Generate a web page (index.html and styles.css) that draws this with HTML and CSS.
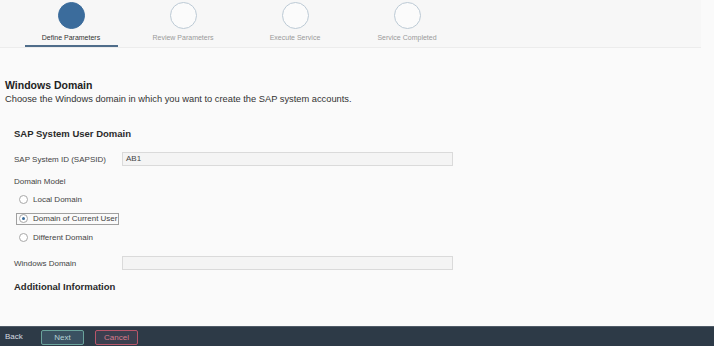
FILE: index.html
```html
<!DOCTYPE html>
<html lang="en">
<head>
  <meta charset="UTF-8"/>
  <title>Windows Domain - Define Parameters</title>
  <link rel="stylesheet" href="styles.css">
</head>
<body>
  <div class="steps">
    <div class="step active"><span class="dot"></span><span class="label">Define Parameters</span></div>
    <div class="step"><span class="dot"></span><span class="label">Review Parameters</span></div>
    <div class="step"><span class="dot"></span><span class="label">Execute Service</span></div>
    <div class="step"><span class="dot"></span><span class="label">Service Completed</span></div>
  </div>

  <main class="main">
    <h1>Windows Domain</h1>
    <p class="desc">Choose the Windows domain in which you want to create the SAP system accounts.</p>

    <section class="group">
      <h2>SAP System User Domain</h2>
      <div class="row first">
        <label>SAP System ID (SAPSID)</label>
        <div class="field">AB1</div>
      </div>
      <div class="caption">Domain Model</div>
      <ul class="radios">
        <li><span class="radio"></span>Local Domain</li>
        <li class="checked"><span class="focus"><span class="radio"></span>Domain of Current User</span></li>
        <li><span class="radio"></span>Different Domain</li>
      </ul>
      <div class="row">
        <label>Windows Domain</label>
        <div class="field"></div>
      </div>
      <h2 class="more">Additional Information</h2>
    </section>
  </main>

  <footer class="footer">
    <span class="back">Back</span>
    <button class="btn btn-next">Next</button>
    <button class="btn btn-cancel">Cancel</button>
  </footer>
</body>
</html>
```
FILE: styles.css
```css
/* ===== Global ===== */
* { margin:0; padding:0; box-sizing:border-box; }
body {
  font-family:'Liberation Sans',Arial,sans-serif;
  background:#fafafa; color:#333;
  height:100vh; overflow:hidden;
  display:flex; flex-direction:column;
}

/* ===== Steps ===== */
.steps{display:flex;padding-left:15px;width:701px;background:#f7f7f7;border-bottom:1px solid #ececec;}
.step{width:112px;display:flex;flex-direction:column;align-items:center;padding-top:2px;}
.step .dot{width:27px;height:27px;border-radius:50%;border:1px solid #bccad5;background:#fbfbfb;}
.step .label{margin-top:4px;font-size:7px;line-height:9px;color:#9a9a9a;}
.step::after{content:'';display:block;width:93px;height:2px;margin-top:3px;}
.step.active .dot{background:#3b6c9c;border-color:#3b6c9c;}
.step.active .label{color:#333;}
.step.active::after{background:#4f6d8a;}

/* ===== Main ===== */
.main{padding:0 5px;}
.main h1{margin-top:31px;font-size:10.5px;line-height:13px;font-weight:700;color:#222;}
.desc{font-size:9.3px;line-height:14px;color:#333;}
.group{padding-left:9px;}
.group h2{margin-top:22px;font-size:9.5px;line-height:12px;font-weight:700;color:#2a2a2a;}
.row{display:flex;align-items:center;height:14px;margin-top:9px;}
.row.first{margin-top:12px;}
.row label{width:108px;font-size:8px;color:#444;}
.field{width:331px;height:14px;background:#f4f4f4;border:1px solid #dadada;font-size:8px;line-height:12px;padding-left:3px;color:#444;}
.caption{margin-top:11px;font-size:8px;line-height:10px;color:#444;}
.radios{list-style:none;margin-top:3px;}
.radios li{height:19px;display:flex;align-items:center;font-size:8px;color:#444;padding-left:5px;}
.radio{width:9px;height:9px;border-radius:50%;border:1px solid #a8a8a8;background:#fff;margin-right:5px;display:flex;align-items:center;justify-content:center;}
.checked .radio::after{content:'';width:3px;height:3px;border-radius:50%;background:#3b6c9c;}
.focus{display:flex;align-items:center;margin-left:-3px;padding:1px 1px 1px 2px;border:1px solid #a0a0a0;height:12px;}
.group h2.more{margin-top:11px;}

/* ===== Footer ===== */
.footer{margin-top:auto;height:20px;background:#2d3a47;border-top:1px solid #4f5b67;display:flex;align-items:flex-end;padding:0 0 1px 5px;}
.back{font-size:8px;color:#d6dbe0;align-self:center;width:36px;}
.btn{width:43px;height:15px;font-family:inherit;font-size:8px;border-radius:2px;cursor:pointer;}
.btn-next{background:#3a5161;border:1px solid #6aa39c;color:#b6d1d6;}
.btn-cancel{margin-left:11px;background:#3b3f4f;border:1px solid #b8566a;color:#d77c8d;}
```
